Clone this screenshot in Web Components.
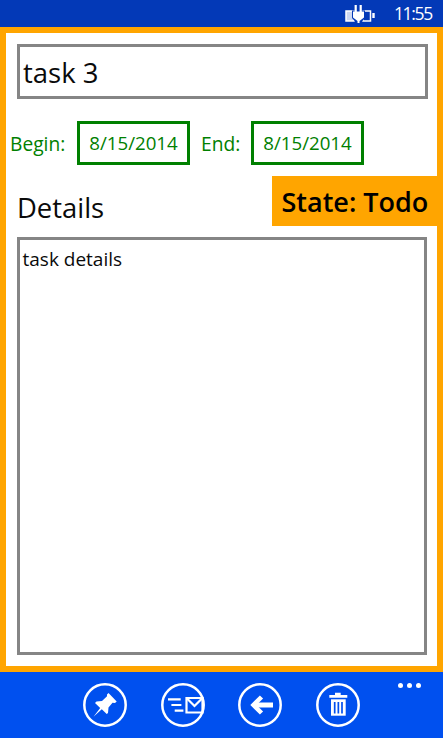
<!DOCTYPE html>
<html>
<head>
<meta charset="utf-8">
<style>
    html, body { margin: 0; padding: 0; height: 100%; }
    body { font-family: "Open Sans", "Noto Sans", sans-serif; overflow: hidden; }
</style>
</head>
<body>
<task-screen>
    <status-bar slot="status" time="11:55"></status-bar>
    <task-page slot="page">
        <title-box slot="title">task 3</title-box>
        <date-field slot="dates" label="Begin:" style="--label-width: 55px">8/15/2014</date-field>
        <date-field slot="dates" label="End:" style="--label-width: 38px">8/15/2014</date-field>
        <span slot="heading">Details</span>
        <state-tag slot="state">State: Todo</state-tag>
        <details-box slot="details">task details</details-box>
    </task-page>
    <app-bar slot="bar">
        <round-button icon="pin"></round-button>
        <round-button icon="mail"></round-button>
        <round-button icon="back"></round-button>
        <round-button icon="trash"></round-button>
    </app-bar>
</task-screen>

<script>
function define(name, css, html) {
    customElements.define(name, class extends HTMLElement {
        constructor() {
            super();
            this.attachShadow({ mode: 'open' });
            const template = document.createElement('template');
            template.innerHTML = `<style>${css}</style>${html(this)}`;
            this.shadowRoot.appendChild(template.content.cloneNode(true));
        }
    });
}

define('task-screen', `
    :host { display: flex; flex-direction: column; width: 443px; height: 738px; background: #fff; }
    ::slotted([slot=page]) { flex: 1; min-height: 0; }
`, () => `<slot name="status"></slot><slot name="page"></slot><slot name="bar"></slot>`);

define('status-bar', `
    :host { display: flex; align-items: center; justify-content: flex-end; height: 27px; flex: none;
        background: #0339b7; color: #fff; padding-right: 11px; box-sizing: border-box; }
    svg { display: block; margin: 1px 19px 0 0; }
    span { font-size: 17.5px; line-height: 27px; letter-spacing: -1.3px; }
`, el => `
    <svg width="31" height="18" viewBox="0 0 31 18" fill="none">
        <path d="M2 6h8v10H2z" fill="#fff" fill-opacity=".8" stroke="#fff" stroke-width="1.500"/>
        <path d="M19 6h7.500v10H19z" stroke="#fff" stroke-width="1.500"/>
        <rect x="28.300" y="8" width="2.400" height="5" fill="#fff"/>
        <path d="M8 5.500h13v7.500l-4 4.500h-5L8 13z" fill="#0339b7"/>
        <path d="M11.700 0v7M16.700 0v7" stroke="#fff" stroke-width="2.200"/>
        <path d="M9 6.500h11v6l-4.500 3.500V18h-2v-2L9 12.500z" fill="#fff"/>
    </svg>
    <span>${el.getAttribute('time')}</span>
`);

define('task-page', `
    :host { display: flex; flex-direction: column; box-sizing: border-box; border: 6px solid #ffa500;
        background: #fff; padding: 11px 0 11px 0; }
    .title { display: block; margin: 0 9px 0 11px; }
    .dates { display: flex; align-items: center; gap: 11px; margin: 22px 0 0 4px; }
    .head { display: flex; justify-content: space-between; margin-top: 11px; height: 50px; }
    .heading { font-size: 27.4px; line-height: 38px; margin: 13px 0 0 11px; color: #0a0a0a; }
    .details { display: flex; flex: 1; margin: 11px 10px 0 11px; min-height: 0; }
    ::slotted([slot=details]) { flex: 1; }
`, () => `
    <div class="title"><slot name="title"></slot></div>
    <div class="dates"><slot name="dates"></slot></div>
    <div class="head">
        <div class="heading"><slot name="heading"></slot></div>
        <slot name="state"></slot>
    </div>
    <div class="details"><slot name="details"></slot></div>
`);

define('title-box', `
    :host { display: block; box-sizing: border-box; height: 55px; border: 3px solid #858585;
        padding-left: 3px; font-size: 27.5px; line-height: 52px; color: #0a0a0a; }
`, () => `<slot></slot>`);

define('date-field', `
    :host { display: flex; align-items: center; gap: 12px; color: #008000; font-size: 19.2px; }
    .label { width: var(--label-width); white-space: nowrap; }
    .box { box-sizing: border-box; width: 113px; height: 44px; border: 3px solid #008000;
        text-align: center; line-height: 38px; font-size: 18.7px; }
`, el => `<span class="label">${el.getAttribute('label')}</span><div class="box"><slot></slot></div>`);

define('state-tag', `
    :host { display: block; box-sizing: border-box; width: 165px; height: 50px; background: #ffa500;
        color: #000; font-size: 27px; font-weight: 600; line-height: 52px; padding-left: 9.500px; white-space: nowrap; }
`, () => `<slot></slot>`);

define('details-box', `
    :host { display: block; box-sizing: border-box; border: 3px solid #858585; padding: 6px 2.500px;
        font-size: 19px; line-height: 26px; color: #0a0a0a; }
`, () => `<slot></slot>`);

define('app-bar', `
    :host { display: flex; flex: none; height: 66px; background: #0050ef; position: relative;
        gap: 33.600px; padding: 11px 0 0 83px; box-sizing: border-box; }
    .more { position: absolute; top: 11px; left: 397.500px; display: flex; gap: 4.300px; }
    .more i { width: 5px; height: 5px; border-radius: 50%; background: #fff; }
`, () => `<slot></slot><div class="more"><i></i><i></i><i></i></div>`);

const icons = {
    pin: `<path d="M25.500 10L33.700 18.500L32 20L29.500 19.800L25.500 24.500L25 30L23.700 31L18.800 26.300L10.500 33.700L17.200 25L12 20L13.500 18.500L19 18L24 13.200L24 11.500Z" fill="#fff"/>`,
    mail: `<path d="M7 16.300h12.700M10.400 22h10M13.700 27.700h8.700" stroke="#fff" stroke-width="2.200" fill="none"/>
        <path d="M25.500 15h16v14.500h-16z" fill="none" stroke="#fff" stroke-width="2.200"/>
        <path d="M26 15.500l7.500 7.500 7.500-7.500" fill="none" stroke="#fff" stroke-width="2.200"/>`,
    back: `<path d="M35 22H17" stroke="#fff" stroke-width="5"/><path d="M23.500 14L15.500 22l8 8" fill="none" stroke="#fff" stroke-width="4.500"/>`,
    trash: `<path d="M13.300 12h18v2.700h-18zM19 9.700h5.700V12H19z" fill="#fff"/>
        <path d="M15 16.300h14.700v16.400H15z" fill="#fff"/>
        <path d="M18.700 19v11.500M22.350 19v11.500M26 19v11.500" stroke="#0050ef" stroke-width="1.700"/>`
};

define('round-button', `
    :host { display: block; width: 44px; height: 44px; flex: none; }
    svg { display: block; }
`, el => `
    <svg width="44" height="44" viewBox="0 0 44 44">
        <circle cx="22" cy="22" r="20.700" fill="none" stroke="#fff" stroke-width="2.500"/>
        ${icons[el.getAttribute('icon')]}
    </svg>
`);
</script>
</body>
</html>
